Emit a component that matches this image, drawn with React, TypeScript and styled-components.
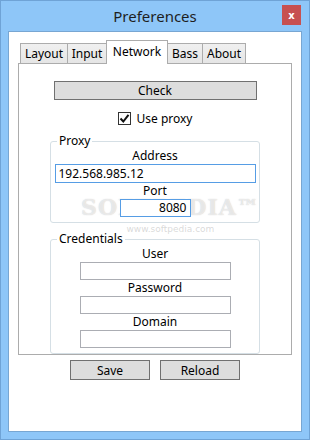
import React from "react";
import styled, { createGlobalStyle } from "styled-components";

const GlobalStyle = createGlobalStyle`
  html, body {
    margin: 0;
    padding: 0;
    background: #8ec6f8;
  }
  body {
    font-family: "Noto Sans", "Open Sans", sans-serif;
    font-size: 12px;
    color: #000;
  }
`;

const Window = styled.div`
  position: relative;
  box-sizing: border-box;
  width: 310px;
  height: 440px;
  background: #8ec6f8;
  border: 1px solid #6fa3d6;
  display: flex;
  flex-direction: column;
`;

const TitleBar = styled.div`
  position: relative;
  height: 30px;
  display: flex;
  align-items: center;
  justify-content: center;
`;

const Title = styled.div`
  font-size: 15px;
  color: #1e1e1e;
  margin-top: -1px;
`;

const CloseButton = styled.div`
  position: absolute;
  top: 4px;
  right: 8px;
  width: 19px;
  height: 20px;
  background: #c75050;
  color: #fff;
  font-family: "DejaVu Sans", sans-serif;
  font-weight: bold;
  font-size: 10px;
  display: flex;
  align-items: center;
  justify-content: center;
`;

const Client = styled.div`
  flex: 1;
  margin: 0 7px 7px 7px;
  background: #fff;
  border: 1px solid #78a6d2;
  padding: 9px 9px 0 9px;
  display: flex;
  flex-direction: column;
`;

const TabStrip = styled.div`
  display: flex;
  align-items: flex-end;
  height: 23px;
  padding-left: 2px;
  margin-bottom: -1px;
  position: relative;
  z-index: 1;
`;

const Tab = styled.div<{ $w: number; $active?: boolean }>`
  box-sizing: border-box;
  width: ${(p) => p.$w}px;
  height: ${(p) => (p.$active ? 24 : 21)}px;
  margin-left: -1px;
  border: 1px solid #acacac;
  border-bottom: ${(p) => (p.$active ? "none" : "1px solid #acacac")};
  background: ${(p) =>
    p.$active ? "#fff" : "linear-gradient(#f0f0f0, #e5e5e5)"};
  display: flex;
  align-items: ${(p) => (p.$active ? "flex-start" : "center")};
  padding-top: ${(p) => (p.$active ? 2 : 0)}px;
  justify-content: center;
  position: relative;
  z-index: ${(p) => (p.$active ? 2 : 1)};
  &:first-child {
    margin-left: 0;
  }
`;

const Panel = styled.div`
  box-sizing: border-box;
  height: 292px;
  border: 1px solid #acacac;
  display: flex;
  flex-direction: column;
  align-items: center;
  padding-top: 17px;
`;

const Button = styled.div<{ $w: number }>`
  box-sizing: border-box;
  width: ${(p) => p.$w}px;
  height: 20px;
  background: #dddddd;
  border: 1px solid #707070;
  display: flex;
  align-items: center;
  justify-content: center;
`;

const CheckRow = styled.div`
  display: flex;
  align-items: center;
  gap: 6px;
  margin-top: 11px;
  height: 14px;
`;

const CheckBox = styled.div`
  box-sizing: border-box;
  width: 13px;
  height: 13px;
  border: 1px solid #333;
  background: #fff;
  display: flex;
  align-items: center;
  justify-content: center;
`;

const Group = styled.fieldset<{ $top: number }>`
  box-sizing: border-box;
  width: 210px;
  margin: ${(p) => p.$top}px 0 0 0;
  padding: 0 0 5px 0;
  border: 1px solid #d5dfe5;
  border-radius: 3px;
  display: flex;
  flex-direction: column;
  align-items: center;
`;

const Legend = styled.legend`
  margin-left: 6px;
  padding: 0 2px;
  line-height: 14px;
`;

const FieldLabel = styled.div`
  height: 16px;
  line-height: 16px;
`;

const Input = styled.div<{ $w: number; $h: number; $focus?: boolean; $right?: boolean }>`
  position: relative;
  z-index: 3;
  box-sizing: border-box;
  width: ${(p) => p.$w}px;
  height: ${(p) => p.$h}px;
  border: 1px solid ${(p) => (p.$focus ? "#569de5" : "#abadb3")};
  background: #fff;
  padding: 0 3px;
  display: flex;
  align-items: center;
  justify-content: ${(p) => (p.$right ? "flex-end" : "flex-start")};
  line-height: 16px;
`;

const ButtonRow = styled.div`
  display: flex;
  justify-content: center;
  gap: 10px;
  margin-top: 5px;
`;

const Watermark = styled.div`
  position: absolute;
  left: 80px;
  top: 194px;
  z-index: 2;
  pointer-events: none;
  display: flex;
  flex-direction: column;
  align-items: center;
`;

const WatermarkLogo = styled.div`
  font-family: "DejaVu Serif", serif;
  font-weight: bold;
  font-size: 22px;
  line-height: 24px;
  letter-spacing: 1px;
  color: rgba(255, 255, 255, 0.6);
  text-shadow: 0 0 1px rgba(150, 150, 150, 0.55);
`;

const WatermarkUrl = styled.div`
  font-family: "DejaVu Sans", sans-serif;
  font-size: 9px;
  line-height: 10px;
  margin-top: 5px;
  color: rgba(170, 170, 170, 0.45);
`;

const tabs = [
  { name: "Layout", w: 48 },
  { name: "Input", w: 40 },
  { name: "Network", w: 62, active: true },
  { name: "Bass", w: 36 },
  { name: "About", w: 44 },
];

export default function App() {
  return (
    <>
      <GlobalStyle />
      <Window>
        <TitleBar>
          <Title>Preferences</Title>
          <CloseButton>x</CloseButton>
        </TitleBar>
        <Client>
          <TabStrip>
            {tabs.map((t) => (
              <Tab key={t.name} $w={t.w} $active={t.active}>
                {t.name}
              </Tab>
            ))}
          </TabStrip>
          <Panel>
            <Button $w={203}>Check</Button>
            <CheckRow>
              <CheckBox>
                <svg width="11" height="11" viewBox="0 0 11 11">
                  <path d="M1.5 5.5 L4.3 8.5 L9.5 1.8" fill="none" stroke="#111" strokeWidth="2" />
                </svg>
              </CheckBox>
              <span>Use proxy</span>
            </CheckRow>
            <Group $top={9}>
              <Legend>Proxy</Legend>
              <FieldLabel>Address</FieldLabel>
              <Input $w={201} $h={19} $focus>
                192.568.985.12
              </Input>
              <FieldLabel>Port</FieldLabel>
              <Input $w={71} $h={18} $focus $right>
                8080
              </Input>
            </Group>
            <Group $top={9}>
              <Legend>Credentials</Legend>
              <FieldLabel>User</FieldLabel>
              <Input $w={151} $h={18} />
              <FieldLabel>Password</FieldLabel>
              <Input $w={151} $h={18} />
              <FieldLabel>Domain</FieldLabel>
              <Input $w={151} $h={18} />
            </Group>
          </Panel>
          <ButtonRow>
            <Button $w={80}>Save</Button>
            <Button $w={80}>Reload</Button>
          </ButtonRow>
        </Client>
        <Watermark>
          <WatermarkLogo>SOFTPEDIA™</WatermarkLogo>
          <WatermarkUrl>www.softpedia.com</WatermarkUrl>
        </Watermark>
      </Window>
    </>
  );
}
